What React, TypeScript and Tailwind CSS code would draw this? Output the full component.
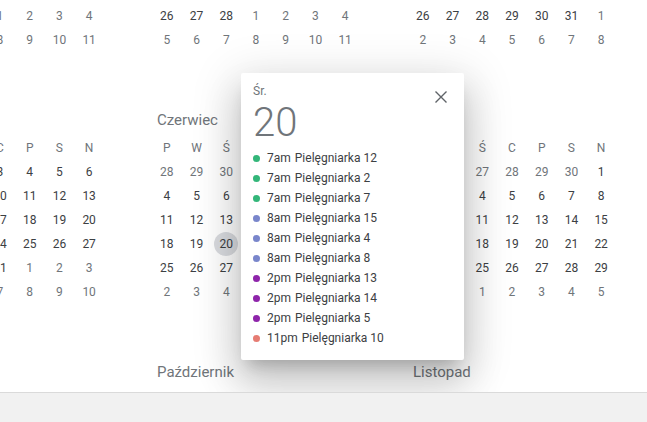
import React from "react";

const MONTHS = [
  "Styczeń",
  "Luty",
  "Marzec",
  "Kwiecień",
  "Maj",
  "Czerwiec",
  "Lipiec",
  "Sierpień",
  "Wrzesień",
  "Październik",
  "Listopad",
  "Grudzień",
];
const DAYS = ["P", "W", "Ś", "C", "P", "S", "N"];
const YEAR = 2018;

type Cell = { d: number; inMonth: boolean; key: string };

function monthCells(m: number): Cell[] {
  const first = new Date(YEAR, m, 1);
  const offset = (first.getDay() + 6) % 7;
  const cells: Cell[] = [];
  for (let i = 0; i < 42; i++) {
    const dt = new Date(YEAR, m, 1 - offset + i);
    cells.push({ d: dt.getDate(), inMonth: dt.getMonth() === m, key: `${m}-${i}` });
  }
  return cells;
}

function Month({ m }: { m: number }) {
  const cells = monthCells(m);
  return (
    <div className="w-[208px]">
      <div className="h-[32px] flex items-center pl-[5px] text-[15px] text-[#70757a]">
        {MONTHS[m]}
      </div>
      <div className="grid grid-cols-7">
        {DAYS.map((d, i) => (
          <div key={i} className="h-[24px] flex items-center justify-center text-[12px] text-[#70757a]">
            {d}
          </div>
        ))}
        {cells.map((c) => {
          const hl = m === 5 && c.inMonth && c.d === 20;
          return (
            <div key={c.key} className="h-[24px] flex items-center justify-center">
              <span
                className={
                  "w-[24px] h-[24px] rounded-full flex items-center justify-center text-[12px] " +
                  (hl ? "bg-[#dadce0] text-[#3c4043]" : c.inMonth ? "text-[#3c4043]" : "text-[#70757a]")
                }
              >
                {c.d}
              </span>
            </div>
          );
        })}
      </div>
    </div>
  );
}

const EVENTS: { t: string; n: string; c: string }[] = [
  { t: "7am", n: "Pielęgniarka 12", c: "bg-[#33b679]" },
  { t: "7am", n: "Pielęgniarka 2", c: "bg-[#33b679]" },
  { t: "7am", n: "Pielęgniarka 7", c: "bg-[#33b679]" },
  { t: "8am", n: "Pielęgniarka 15", c: "bg-[#7986cb]" },
  { t: "8am", n: "Pielęgniarka 4", c: "bg-[#7986cb]" },
  { t: "8am", n: "Pielęgniarka 8", c: "bg-[#7986cb]" },
  { t: "2pm", n: "Pielęgniarka 13", c: "bg-[#8e24aa]" },
  { t: "2pm", n: "Pielęgniarka 14", c: "bg-[#8e24aa]" },
  { t: "2pm", n: "Pielęgniarka 5", c: "bg-[#8e24aa]" },
  { t: "11pm", n: "Pielęgniarka 10", c: "bg-[#e67c73]" },
];

export default function App() {
  return (
    <div className="w-[647px] h-[422px] bg-[#f1f1f1] font-[family-name:Roboto,sans-serif] overflow-hidden">
      <div className="relative w-[647px] h-[393px] bg-white border-b border-[#dadada] overflow-hidden">
        <div className="ml-[-104px] mt-[-148px] grid grid-cols-[repeat(4,208px)] gap-x-[48px] gap-y-[52px]">
          {Array.from({ length: 12 }, (_, m) => (
            <Month key={m} m={m} />
          ))}
        </div>

        <div className="absolute left-[241px] top-[73px] w-[223px] bg-white rounded-[2px] pl-[12px] pr-[11px] pt-[10px] pb-[12px] shadow-[0_24px_38px_3px_rgba(0,0,0,0.14),0_9px_46px_8px_rgba(0,0,0,0.12),0_11px_15px_-7px_rgba(0,0,0,0.2)]">
          <div className="flex items-start justify-between">
            <div>
              <div className="text-[12px] leading-[16px] text-[#70757a]">Śr.</div>
              <div className="mt-[4px] text-[40px] leading-[40px] font-light text-[#70757a]">20</div>
            </div>
            <button className="w-[24px] h-[24px] mt-[2px] flex items-center justify-center text-[#5f6368]">
              <svg width="14" height="14" viewBox="0 0 14 14" fill="none" stroke="currentColor" strokeWidth="1.4">
                <path d="M1.5 1.5 L12.5 12.5 M12.5 1.5 L1.5 12.5" />
              </svg>
            </button>
          </div>
          <div className="mt-[5px]">
            {EVENTS.map((e, i) => (
              <div key={i} className="h-[20px] flex items-center text-[12px] text-[#3c4043]">
                <span className={"w-[7px] h-[7px] rounded-full mr-[7px] shrink-0 " + e.c} />
                <span>{e.t}</span>
                <span className="ml-[4px]">{e.n}</span>
              </div>
            ))}
          </div>
        </div>
      </div>
    </div>
  );
}
